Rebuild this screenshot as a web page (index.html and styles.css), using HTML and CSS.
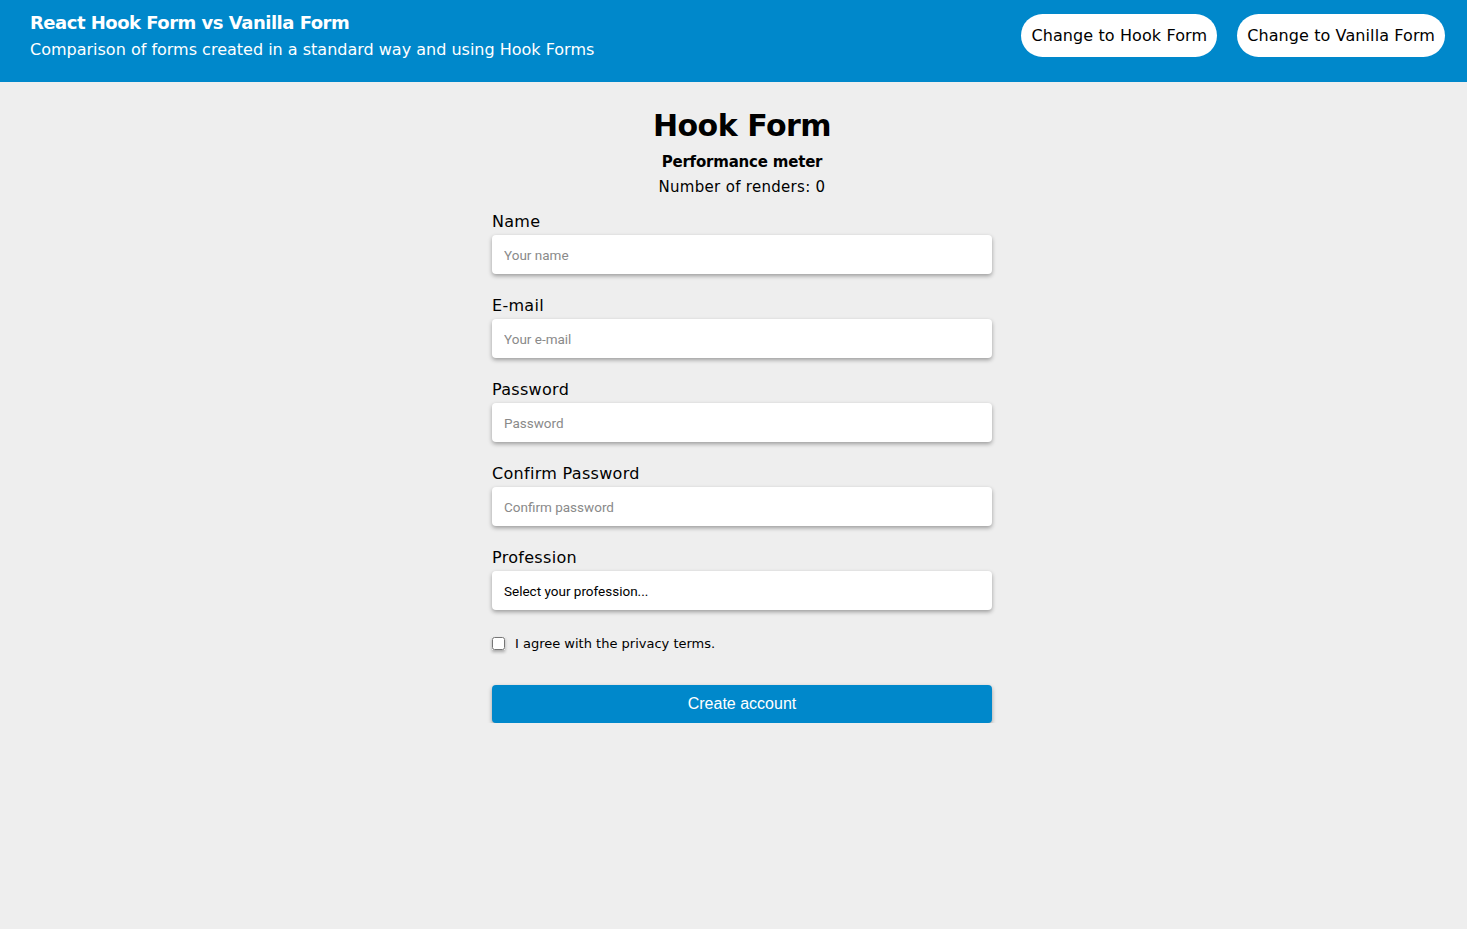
FILE: index.html
```
<!DOCTYPE html>
<html lang="en">
<head>
<meta charset="utf-8">
<title>React Hook Form vs Vanilla Form</title>
<link rel="stylesheet" href="styles.css">
</head>
<body>
<header class="topbar">
  <div class="brand">
    <div class="brand-title">React Hook Form vs Vanilla Form</div>
    <div class="brand-sub">Comparison of forms created in a standard way and using Hook Forms</div>
  </div>
  <nav class="switch">
    <button class="pill">Change to Hook Form</button>
    <button class="pill">Change to Vanilla Form</button>
  </nav>
</header>
<main class="page">
  <h1 class="title">Hook Form</h1>
  <div class="meter">
    <div class="meter-title">Performance meter</div>
    <div class="meter-count">Number of renders: 0</div>
  </div>
  <form class="form">
    <label class="field">
      <span class="label">Name</span>
      <input class="input" type="text" placeholder="Your name">
    </label>
    <label class="field">
      <span class="label">E-mail</span>
      <input class="input" type="email" placeholder="Your e-mail">
    </label>
    <label class="field">
      <span class="label">Password</span>
      <input class="input" type="password" placeholder="Password">
    </label>
    <label class="field">
      <span class="label">Confirm Password</span>
      <input class="input" type="password" placeholder="Confirm password">
    </label>
    <label class="field">
      <span class="label">Profession</span>
      <select class="input select">
        <option>Select your profession...</option>
      </select>
    </label>
    <label class="agree">
      <input class="check" type="checkbox">
      <span>I agree with the privacy terms.</span>
    </label>
    <button class="submit" type="button">Create account</button>
  </form>
</main>
</body>
</html>
```
FILE: styles.css
```
* { box-sizing: border-box; }
html, body { margin: 0; padding: 0; background: #eeeeee; }
body {
  font-family: "DejaVu Sans", sans-serif;
  color: #000;
}
.topbar {
  height: 82px;
  background: #0088cb;
  display: flex;
  align-items: center;
  justify-content: space-between;
  padding: 0 22px 0 30px;
  color: #fff;
}
.brand { display: flex; flex-direction: column; gap: 7px; margin-top: -9px; }
.brand-title { font-weight: 700; font-size: 18px; letter-spacing: -0.5px; line-height: 20px; }
.brand-sub { font-size: 16px; letter-spacing: 0; line-height: 20px; }
.switch { display: flex; gap: 20px; margin-top: -12px; }
.pill {
  height: 43px;
  border: none;
  border-radius: 22px;
  background: #fff;
  color: #000;
  font-family: "DejaVu Sans", sans-serif;
  font-size: 16px;
  padding: 0 10px;
  letter-spacing: 0.1px;
  cursor: pointer;
}
.page {
  display: flex;
  flex-direction: column;
  align-items: center;
  padding-top: 26px;
  padding-left: 17px;
}
.title {
  margin: 0;
  font-size: 30px;
  font-weight: 700;
  line-height: 36px;
  letter-spacing: -0.5px;
}
.meter { text-align: center; margin-top: 6px; }
.meter-title { font-weight: 700; font-size: 15px; line-height: 24px; letter-spacing: -0.2px; }
.meter-count { font-size: 15px; line-height: 26px; letter-spacing: 0.3px; }
.form {
  width: 500px;
  display: flex;
  flex-direction: column;
  margin-top: 9px;
}
.field { display: flex; flex-direction: column; margin-bottom: 19px; }
.label { font-size: 16px; line-height: 26px; letter-spacing: 0.3px; }
.input {
  height: 39px;
  border: none;
  border-radius: 4px;
  background: #fff;
  box-shadow: 0 2px 4px rgba(0,0,0,0.35);
  padding: 0 12px;
  font-family: Roboto, "Liberation Sans", sans-serif;
  font-size: 13.5px;
  color: #000;
  outline: none;
}
.input::placeholder { color: #8a8a8a; }
.select {
  appearance: none;
  -webkit-appearance: none;
}
.agree {
  display: flex;
  align-items: center;
  gap: 10px;
  font-size: 13px;
  margin-top: 7px;
  letter-spacing: 0;
}
.check {
  width: 13px;
  height: 13px;
  margin: 0;
  box-shadow: 0 2px 3px rgba(0,0,0,0.3);
}
.submit {
  margin-top: 34px;
  height: 38px;
  border: none;
  border-radius: 4px;
  background: #0088cb;
  color: #fff;
  font-family: "Liberation Sans", Arial, sans-serif;
  font-size: 16px;
  box-shadow: 0 2px 4px rgba(0,0,0,0.35);
  cursor: pointer;
}
```
